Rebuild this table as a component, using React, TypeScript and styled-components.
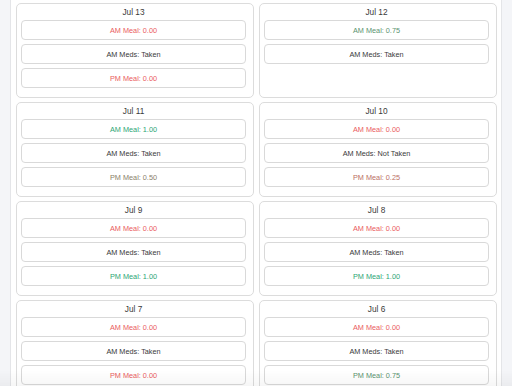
import styled, { createGlobalStyle } from "styled-components";

const GlobalStyle = createGlobalStyle`
  html, body {
    margin: 0;
    padding: 0;
    background: #f4f5f8;
    font-family: "Liberation Sans", Arial, sans-serif;
    -webkit-font-smoothing: antialiased;
  }
`;

interface Entry {
  date: string;
  amMeal: number;
  amMeds?: string;
  pmMeal?: number;
}

const entries: Entry[] = [
  { date: "Jul 13", amMeal: 0, amMeds: "Taken", pmMeal: 0 },
  { date: "Jul 12", amMeal: 0.75, amMeds: "Taken" },
  { date: "Jul 11", amMeal: 1, amMeds: "Taken", pmMeal: 0.5 },
  { date: "Jul 10", amMeal: 0, amMeds: "Not Taken", pmMeal: 0.25 },
  { date: "Jul 9", amMeal: 0, amMeds: "Taken", pmMeal: 1 },
  { date: "Jul 8", amMeal: 0, amMeds: "Taken", pmMeal: 1 },
  { date: "Jul 7", amMeal: 0, amMeds: "Taken", pmMeal: 0 },
  { date: "Jul 6", amMeal: 0, amMeds: "Taken", pmMeal: 0.75 },
];

// red at 0, green at 1
const scoreColor = (s: number) => {
  const r = Math.round(234 + (44 - 234) * s);
  const g = Math.round(92 + (166 - 92) * s);
  const b = Math.round(94 + (118 - 94) * s);
  return `rgb(${r}, ${g}, ${b})`;
};

const Page = styled.div`
  margin: 0 10px;
  min-height: 386px;
  background: #fff;
  border-left: 1px solid #e4e5e8;
  border-right: 1px solid #e4e5e8;
  padding: 3px 4px 0 5px;
  box-sizing: border-box;
  transform: translateZ(0);
`;

const Grid = styled.div`
  display: grid;
  grid-template-columns: 238px 238px;
  column-gap: 5px;
  row-gap: 4px;
`;

const Card = styled.div`
  display: flex;
  flex-direction: column;
  border: 1px solid #dcdcdc;
  border-radius: 5px;
  background: #fff;
  padding: 2px 7px 9px 4px;
  min-height: 93px;
  box-sizing: border-box;
`;

const DateLabel = styled.div`
  height: 12px;
  line-height: 12px;
  margin-bottom: 2px;
  text-align: center;
  font-size: 8.3px;
  color: #3a3a3a;
`;

const Items = styled.div`
  display: flex;
  flex-direction: column;
  gap: 4px;
`;

const Item = styled.div<{ $color?: string }>`
  height: 20px;
  box-sizing: border-box;
  border: 1px solid #d9d9d9;
  border-radius: 4px;
  display: flex;
  align-items: center;
  justify-content: center;
  font-size: 7.3px;
  color: ${({ $color }) => $color || "#3a3a3a"};
`;

const BottomFade = styled.div`
  position: fixed;
  left: 0;
  right: 0;
  bottom: 0;
  height: 16px;
  pointer-events: none;
  background: linear-gradient(rgba(0, 0, 0, 0), rgba(0, 0, 0, 0.035));
`;

export default function App() {
  return (
    <>
      <GlobalStyle />
      <Page>
        <Grid>
          {entries.map((e) => (
            <Card key={e.date}>
              <DateLabel>{e.date}</DateLabel>
              <Items>
                <Item $color={scoreColor(e.amMeal)}>AM Meal: {e.amMeal.toFixed(2)}</Item>
                {e.amMeds && <Item>AM Meds: {e.amMeds}</Item>}
                {e.pmMeal !== undefined && (
                  <Item $color={scoreColor(e.pmMeal)}>PM Meal: {e.pmMeal.toFixed(2)}</Item>
                )}
              </Items>
            </Card>
          ))}
        </Grid>
      </Page>
      <BottomFade />
    </>
  );
}
